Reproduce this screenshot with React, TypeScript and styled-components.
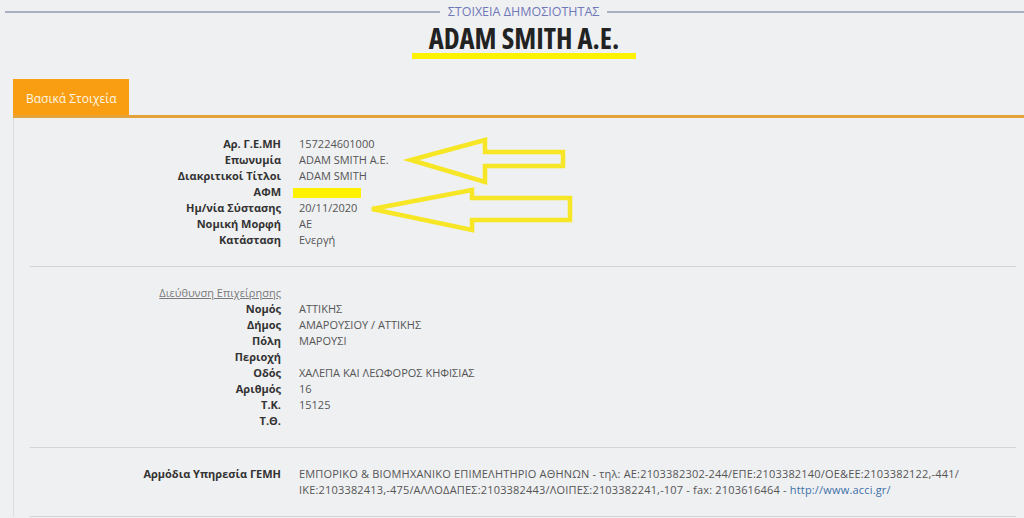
import React from 'react';
import styled, { createGlobalStyle } from 'styled-components';

const GlobalStyle = createGlobalStyle`
    html, body {
        margin: 0;
        padding: 0;
        background: #eff0f2;
    }
    body {
        font-family: "Open Sans", "Liberation Sans", sans-serif;
        width: 1024px;
        height: 518px;
        overflow: hidden;
    }
`

interface GrowI {
    grow: number;
}

const Page = styled.div`
    position: relative;
    width: 1024px;
    height: 518px;
    overflow: hidden;
`

//HEADER
const Legend = styled.div`
    display: flex;
    align-items: center;
    gap: 8px;
    padding: 3px 0 0 5px;
    height: 18px;
`

const LegendLine = styled.span<GrowI>`
    flex: ${(element: GrowI) => element.grow};
    height: 2px;
    background: #aab0c0;
`

const LegendText = styled.span`
    font-size: 12.5px;
    color: #6f78b8;
    line-height: 18px;
    white-space: nowrap;
`

const TitleRow = styled.div`
    display: flex;
    flex-direction: column;
    align-items: center;
    padding-left: 24px;
    margin-top: 3px;
`

const CompanyName = styled.h1`
    margin: 0;
    font-size: 28.5px;
    font-weight: 700;
    font-stretch: 75%;
    line-height: 29px;
    color: #222;
`

const HighlightBar = styled.div`
    width: 224px;
    height: 6px;
    background: #fff200;
`

//TABS
const TabBar = styled.div`
    display: flex;
    margin: 20px 0 0 13px;
    border-bottom: 3px solid #e5a238;
`

const Tab = styled.div`
    background: #f99d12;
    color: #fff6e2;
    font-size: 12px;
    height: 36px;
    line-height: 40px;
    padding: 0 12px 0 13px;
`

//BODY
const Panel = styled.div`
    margin-left: 13px;
    border-left: 1px solid #dcdde0;
`

const Section = styled.div`
    display: grid;
    grid-template-columns: 267px 1fr;
    column-gap: 18px;
    padding: 18px 0;
    font-size: 11px;
    line-height: 16px;
`

const Divider = styled.hr`
    margin: 0 8px 0 16px;
    border: none;
    border-top: 1px solid #d3d4d7;
`

const Label = styled.div`
    grid-column: 1;
    text-align: right;
    font-weight: 700;
    color: #333;
    white-space: nowrap;
`

const Value = styled.div`
    grid-column: 2;
    color: #555;
    white-space: nowrap;
`

const WrapValue = styled(Value)`
    letter-spacing: 0.18px;
`

const GroupLink = styled.div`
    grid-column: 1;
    text-align: right;
    font-size: 11px;
    color: #7a7a7a;
    text-decoration: underline;
`

const Redacted = styled.span`
    display: inline-block;
    width: 68px;
    height: 10px;
    margin: 4px 0 0 -6px;
    background: #fff200;
    vertical-align: top;
`

const ExtLink = styled.a`
    color: #3d6fa8;
    text-decoration: none;
`

const Annotations = styled.svg`
    position: absolute;
    left: 0;
    top: 0;
    pointer-events: none;
`

const basicRows: [string, React.ReactNode][] = [
    ['Αρ. Γ.Ε.ΜΗ', '157224601000'],
    ['Επωνυμία', 'ADAM SMITH A.E.'],
    ['Διακριτικοί Τίτλοι', 'ADAM SMITH'],
    ['ΑΦΜ', <Redacted />],
    ['Ημ/νία Σύστασης', '20/11/2020'],
    ['Νομική Μορφή', 'ΑΕ'],
    ['Κατάσταση', 'Ενεργή'],
];

const addressRows: [string, string][] = [
    ['Νομός', 'ΑΤΤΙΚΗΣ'],
    ['Δήμος', 'ΑΜΑΡΟΥΣΙΟΥ / ΑΤΤΙΚΗΣ'],
    ['Πόλη', 'ΜΑΡΟΥΣΙ'],
    ['Περιοχή', ''],
    ['Οδός', 'ΧΑΛΕΠΑ ΚΑΙ ΛΕΩΦΟΡΟΣ ΚΗΦΙΣΙΑΣ'],
    ['Αριθμός', '16'],
    ['Τ.Κ.', '15125'],
    ['Τ.Θ.', ''],
];

export default function App() {
    return (
        <Page>
            <GlobalStyle />
            <Legend>
                <LegendLine grow={432} />
                <LegendText>ΣΤΟΙΧΕΙΑ ΔΗΜΟΣΙΟΤΗΤΑΣ</LegendText>
                <LegendLine grow={414} />
            </Legend>
            <TitleRow>
                <CompanyName>ADAM SMITH A.E.</CompanyName>
                <HighlightBar />
            </TitleRow>

            <TabBar>
                <Tab>Βασικά Στοιχεία</Tab>
            </TabBar>

            <Panel>
                <Section>
                    {basicRows.map(([label, value]) => (
                        <React.Fragment key={label}>
                            <Label>{label}</Label>
                            <Value>{value || '\u00a0'}</Value>
                        </React.Fragment>
                    ))}
                </Section>
                <Divider />
                <Section>
                    <GroupLink>Διεύθυνση Επιχείρησης</GroupLink>
                    {addressRows.map(([label, value]) => (
                        <React.Fragment key={label}>
                            <Label>{label}</Label>
                            <Value>{value || '\u00a0'}</Value>
                        </React.Fragment>
                    ))}
                </Section>
                <Divider />
                <Section>
                    <Label>Αρμόδια Υπηρεσία ΓΕΜΗ</Label>
                    <WrapValue>
                        ΕΜΠΟΡΙΚΟ &amp; ΒΙΟΜΗΧΑΝΙΚΟ ΕΠΙΜΕΛΗΤΗΡΙΟ ΑΘΗΝΩΝ - τηλ: ΑΕ:2103382302-244/ΕΠΕ:2103382140/ΟΕ&amp;ΕΕ:2103382122,-441/
                        <br />
                        ΙΚΕ:2103382413,-475/ΑΛΛΟΔΑΠΕΣ:2103382443/ΛΟΙΠΕΣ:2103382241,-107 - fax: 2103616464 - <ExtLink href="#">http://www.acci.gr/</ExtLink>
                    </WrapValue>
                </Section>
                <Divider />
            </Panel>

            <Annotations width={1024} height={518} viewBox="0 0 1024 518">
                <g fill="none" stroke="#f6e626" strokeWidth={4.5} strokeLinejoin="miter">
                    <polygon points="411,160 485,140 485,152 563,152 563,166 485,166 485,182" />
                    <polygon points="372,209 472,190 472,198 570,198 570,220 472,220 472,230" />
                </g>
            </Annotations>
        </Page>
    );
}
